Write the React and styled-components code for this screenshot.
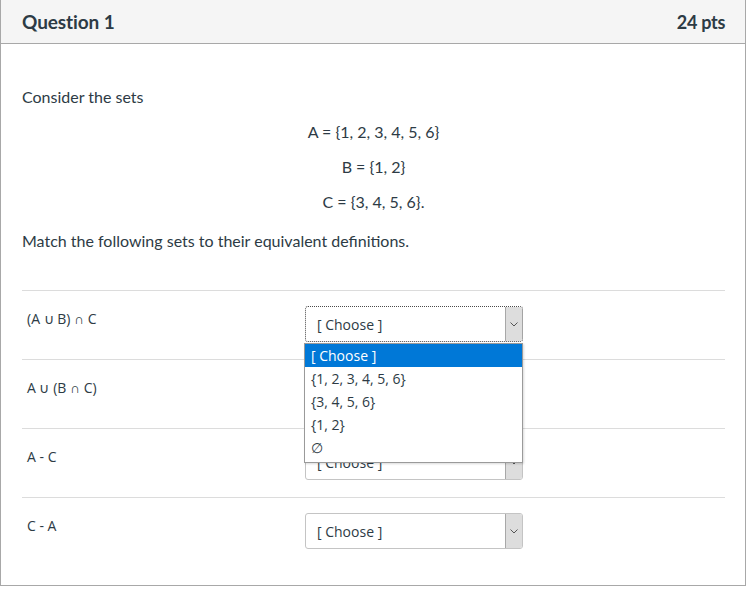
import React from "react";
import styled, { createGlobalStyle } from "styled-components";

const Global = createGlobalStyle`
  body {
    margin: 0;
    background: #fff;
    font-family: Lato, "Liberation Sans", sans-serif;
    color: #2d3b45;
  }
`;

const Card = styled.div`
  width: 744px;
  height: 585px;
  margin-top: -1px;
  border: 1px solid #a8a8a8;
  background: #fff;
`;

const Header = styled.div`
  height: 44px;
  box-sizing: border-box;
  background: #f5f5f5;
  border-bottom: 1px solid #a8a8a8;
  padding: 0 20px 0 21px;
  display: flex;
  align-items: center;
  justify-content: space-between;
  font-weight: 700;
  font-size: 18px;
  color: #2d3b45;
`;

const Title = styled.span`
  font-size: 19px;
  letter-spacing: -0.1px;
`;

const Points = styled.span`
  font-size: 18px;
  letter-spacing: -0.3px;
`;

const Body = styled.div`
  padding: 41px 20px 0 21px;
`;

const Para = styled.p`
  margin: 0 0 ${(p) => p.$mb || 11}px;
  font-size: 16px;
  line-height: 24px;
  text-align: ${(p) => (p.$center ? "center" : "left")};
`;

const Rows = styled.div`
  margin-top: 37px;
`;

const Row = styled.div`
  height: 68px;
  border-top: 1px solid #dcdcdc;
  display: flex;
  align-items: flex-start;
  position: relative;
`;

const Label = styled.div`
  width: 283px;
  padding: 18px 0 0 5px;
  box-sizing: border-box;
  font-family: "Open Sans", "Noto Sans", sans-serif;
  font-size: 14px;
  color: #2d3b45;
`;

const SelectWrap = styled.div`
  position: relative;
  margin-top: 15px;
`;

const SelectBox = styled.div`
  width: 218px;
  height: 36px;
  box-sizing: border-box;
  border: 1px ${(p) => (p.$focus ? "dotted #4a4a4a" : "solid #c4c4c4")};
  border-radius: 3px;
  display: flex;
  align-items: stretch;
  background: #fff;
  overflow: hidden;
`;

const SelectText = styled.div`
  flex: 1;
  display: flex;
  align-items: center;
  padding-left: 11px;
  font-family: "Open Sans", "Noto Sans", sans-serif;
  font-size: 14px;
  color: #2d3b45;
  overflow: hidden;
  white-space: nowrap;
`;

const Arrow = styled.div`
  width: 16px;
  background: #dddddd;
  border-left: 1px solid #a8a8a8;
  display: flex;
  align-items: center;
  justify-content: center;
`;

const List = styled.div`
  position: absolute;
  top: 37px;
  left: -1px;
  width: 219px;
  box-sizing: border-box;
  border: 1px solid #9a9a9a;
  background: #fff;
  box-shadow: 1px 1px 2px rgba(0, 0, 0, 0.15);
  z-index: 5;
  padding-bottom: 3px;
`;

const Option = styled.div`
  height: 23px;
  line-height: 23px;
  padding-left: 6px;
  font-family: "Open Sans", "Noto Sans", sans-serif;
  font-size: 14px;
  background: ${(p) => (p.$active ? "#0078d7" : "#fff")};
  color: ${(p) => (p.$active ? "#fff" : "#2d3b45")};
`;

function Chevron() {
  return (
    <svg width="8" height="5" viewBox="0 0 8 5">
      <path d="M0.5 0.5 L4 4 L7.5 0.5" fill="none" stroke="#555" strokeWidth="1" />
    </svg>
  );
}

const options = ["[ Choose ]", "{1, 2, 3, 4, 5, 6}", "{3, 4, 5, 6}", "{1, 2}", "∅"];

const items = ["(A ∪ B) ∩ C", "A ∪ (B ∩ C)", "A - C", "C - A"];

export default function App() {
  return (
    <>
      <Global />
      <Card>
        <Header>
          <Title>Question 1</Title>
          <Points>24 pts</Points>
        </Header>
        <Body>
          <Para>Consider the sets</Para>
          <Para $center>A = {"{1, 2, 3, 4, 5, 6}"}</Para>
          <Para $center>B = {"{1, 2}"}</Para>
          <Para $center $mb={15}>C = {"{3, 4, 5, 6}."}</Para>
          <Para>Match the following sets to their equivalent definitions.</Para>
          <Rows>
            {items.map((it, i) => (
              <Row key={it}>
                <Label>{it}</Label>
                <SelectWrap>
                  <SelectBox $focus={i === 0}>
                    <SelectText>[ Choose ]</SelectText>
                    <Arrow>
                      <Chevron />
                    </Arrow>
                  </SelectBox>
                  {i === 0 && (
                    <List>
                      {options.map((o, j) => (
                        <Option key={o} $active={j === 0}>
                          {o}
                        </Option>
                      ))}
                    </List>
                  )}
                </SelectWrap>
              </Row>
            ))}
          </Rows>
        </Body>
      </Card>
    </>
  );
}
